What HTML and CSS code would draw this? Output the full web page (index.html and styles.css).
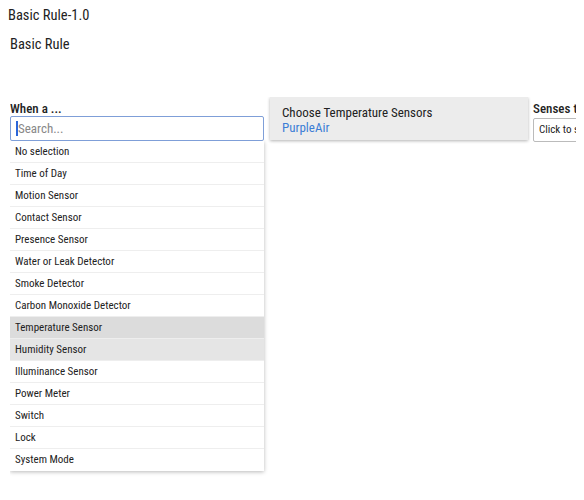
FILE: index.html
```html
<!DOCTYPE html>
<html>
<head>
  <title>Basic Rule</title>
  <link rel="stylesheet" href="styles.css">
</head>
<body>
  <div class="app-title">Basic Rule-1.0</div>
  <h2 class="rule-name">Basic Rule</h2>

  <div class="rule-row">
    <div class="trigger">
      <label class="field-label" for="search">When a ...</label>
      <div class="search-wrap">
        <input type="text" id="search" class="search" placeholder="Search...">
      </div>
      <ul class="options">
        <li>No selection</li>
        <li>Time of Day</li>
        <li>Motion Sensor</li>
        <li>Contact Sensor</li>
        <li>Presence Sensor</li>
        <li>Water or Leak Detector</li>
        <li>Smoke Detector</li>
        <li>Carbon Monoxide Detector</li>
        <li class="selected">Temperature Sensor</li>
        <li class="hovered">Humidity Sensor</li>
        <li>Illuminance Sensor</li>
        <li>Power Meter</li>
        <li>Switch</li>
        <li>Lock</li>
        <li>System Mode</li>
      </ul>
    </div>

    <div class="device-card">
      <div class="card-title">Choose Temperature Sensors</div>
      <a class="card-link" href="#">PurpleAir</a>
    </div>

    <div class="condition">
      <div class="field-label">Senses that</div>
      <div class="picker">Click to select</div>
    </div>
  </div>
</body>
</html>
```

FILE: styles.css
```css
body {
  margin: 8px;
  font-family: "Roboto Condensed", Roboto, "Liberation Sans", sans-serif;
  color: #222;
  background: #fff;
}

.app-title {
  font-size: 14.5px;
  line-height: 16px;
}

.rule-name {
  margin: 13px 0 0 2px;
  font-size: 14.5px;
  font-weight: 400;
  line-height: 16px;
}

.rule-row {
  display: flex;
  align-items: flex-start;
  gap: 6px;
  margin: 44px 0 0 2px;
  padding-bottom: 8px;
  width: 574px;
  overflow: hidden;
}

.field-label {
  display: block;
  font-size: 13px;
  font-weight: 500;
  line-height: 15px;
  color: #222;
  white-space: nowrap;
}

.trigger {
  width: 254px;
  flex: none;
  margin-top: 4px;
}

.search-wrap {
  position: relative;
}

/* text caret of the focused search box */
.search-wrap::after {
  content: "";
  position: absolute;
  left: 6px;
  top: 5px;
  width: 1.5px;
  height: 15px;
  background: #2b66d9;
}

.search {
  display: block;
  box-sizing: border-box;
  width: 254px;
  height: 25px;
  margin: 0;
  padding: 0 5px 0 7px;
  border: 1px solid #7f9fd8;
  border-radius: 2px;
  font-family: inherit;
  font-size: 13px;
  color: #222;
  outline: none;
}

.search::placeholder {
  color: #888;
}

.options {
  list-style: none;
  margin: 0;
  padding: 0;
  width: 254px;
  background: #fff;
  box-shadow: 0 1px 4px rgba(0, 0, 0, 0.28);
}

.options li {
  box-sizing: border-box;
  height: 22px;
  line-height: 21px;
  padding: 0 5px;
  font-size: 11px;
  color: #222;
  border-bottom: 1px solid #eee;
}

.options li:last-child {
  border-bottom: none;
}

.options li.selected {
  background: #dcdcdc;
}

.options li.hovered {
  background: #e5e5e5;
}

.device-card {
  width: 258px;
  flex: none;
  box-sizing: border-box;
  height: 43px;
  padding: 8px 12px 0;
  background: #ececec;
  box-shadow: 0 1px 3px rgba(0, 0, 0, 0.3);
}

.card-title {
  font-size: 13px;
  line-height: 15px;
  color: #222;
}

.card-link {
  display: block;
  font-size: 13px;
  line-height: 15px;
  color: #3c7ed6;
  text-decoration: none;
}

.condition {
  flex: none;
  width: 120px;
  margin-top: 4px;
  margin-left: -1px;
}

.picker {
  box-sizing: border-box;
  height: 24px;
  margin-top: 2px;
  padding: 0 5px;
  border: 1px solid #bbb;
  border-radius: 2px;
  font-size: 11px;
  line-height: 22px;
  color: #222;
  white-space: nowrap;
}
```
